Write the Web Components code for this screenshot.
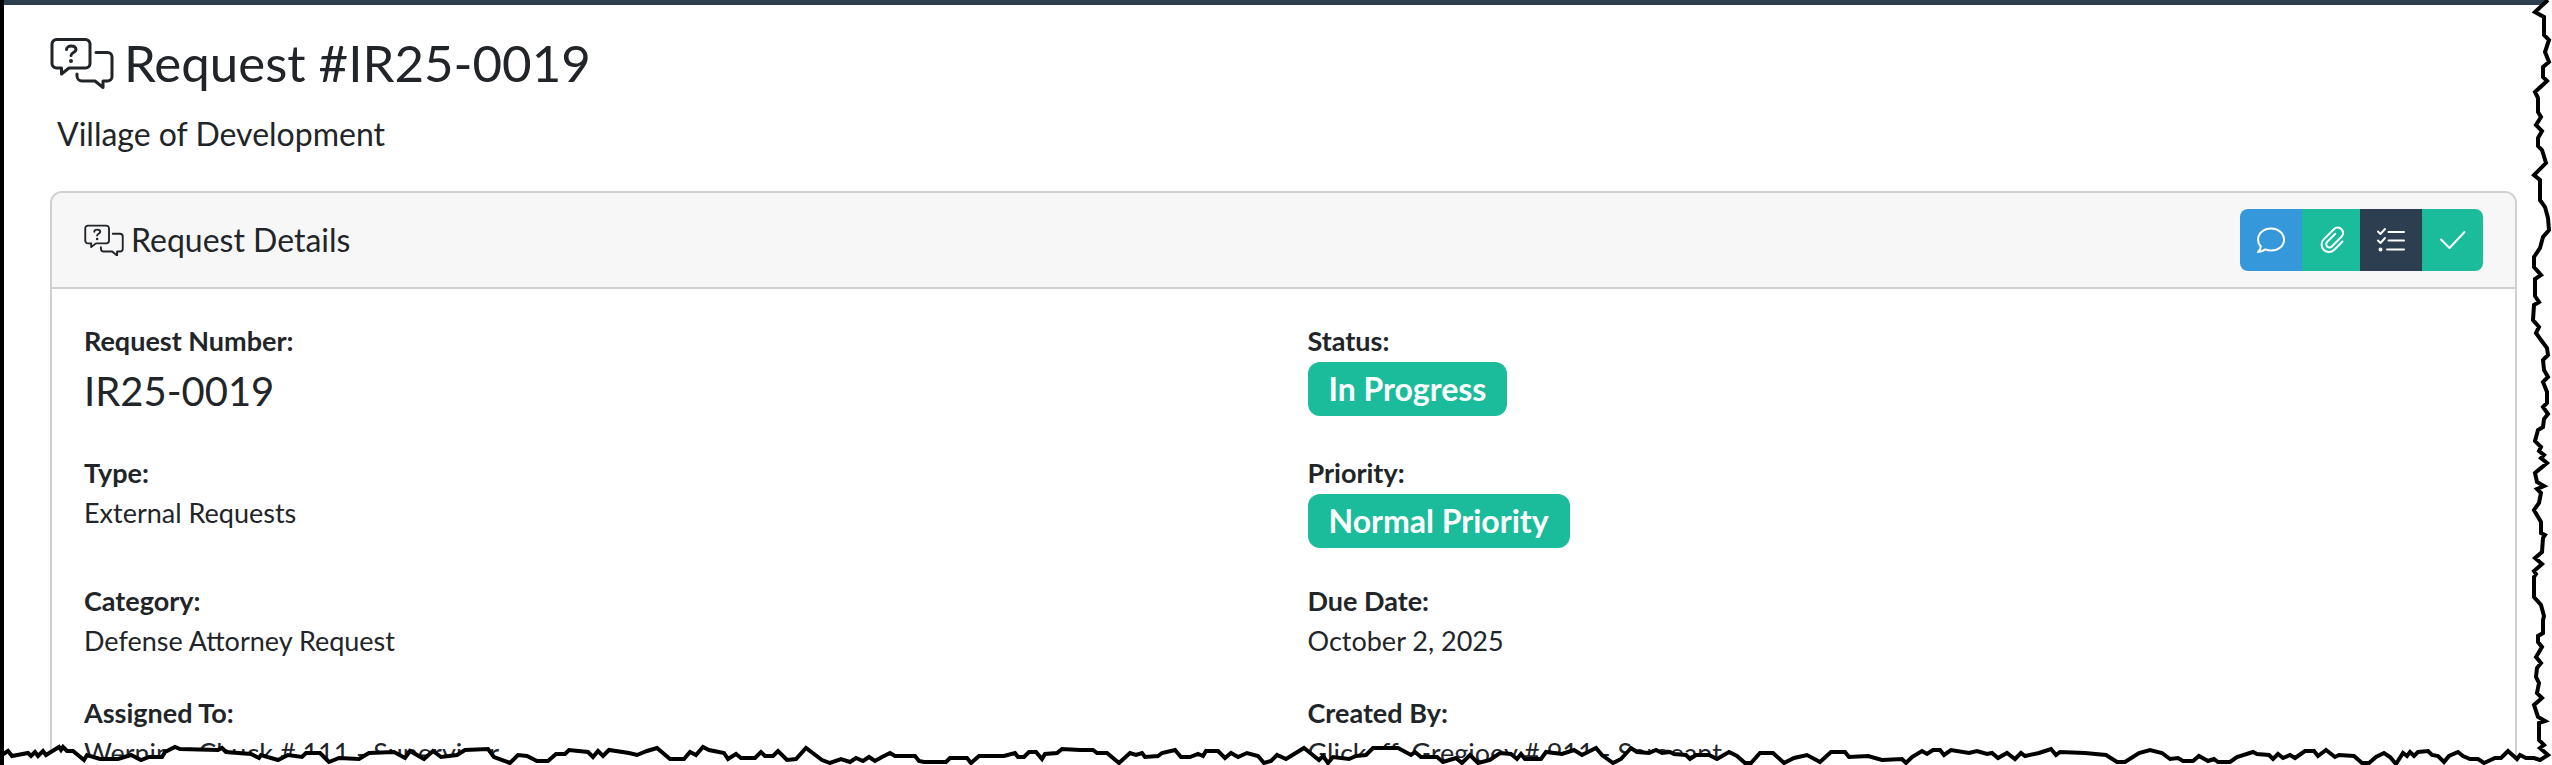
<!DOCTYPE html>
<html lang="en">
<head>
<meta charset="utf-8">
<meta name="viewport" content="width=device-width, initial-scale=1">
<title>Request #IR25-0019</title>
<style>
  body {
    margin: 0;
    background: #fff;
    color: #212529;
    font-family: Lato, "Liberation Sans", sans-serif;
    font-size: 27px;
    line-height: 40px;
  }
</style>
</head>
<body>
<torn-frame>
  <page-heading org="Village of Development">Request #IR25-0019</page-heading>
  <detail-card>
    <span slot="title">Request Details</span>
    <action-group slot="actions">
      <action-button icon="comment" tone="info" label="Comment"></action-button>
      <action-button icon="clip" tone="success" label="Attachments"></action-button>
      <action-button icon="list" tone="primary" label="Tasks"></action-button>
      <action-button icon="check" tone="success" label="Complete"></action-button>
    </action-group>
    <detail-field label="Request Number:" kind="large">IR25-0019</detail-field>
    <detail-field label="Status:" kind="badge">In Progress</detail-field>
    <detail-field label="Type:">External Requests</detail-field>
    <detail-field label="Priority:" kind="badge">Normal Priority</detail-field>
    <detail-field label="Category:">Defense Attorney Request</detail-field>
    <detail-field label="Due Date:">October 2, 2025</detail-field>
    <detail-field label="Assigned To:">Werning, Chuck # 111 - Supervisor</detail-field>
    <detail-field label="Created By:">Glickoff, Gregjoey # 911 - Sergeant</detail-field>
  </detail-card>
</torn-frame>

<script>
/** Base class: renders once into an open shadow root */
class BaseElement extends HTMLElement {
  constructor() {
    super()
    this.attachShadow({ mode: 'open' })
  }
  connectedCallback() { this.shadowRoot.innerHTML = this._template() }
}

const BOTTOM_EDGE = '2,755 8,751 12,756 28,753 31,756 35,752 38,756 43,751 46,755 59,747 61,750 63,747 67,751 73,751 84,760 87,755 100,759 118,759 131,755 141,760 149,757 162,757 165,752 175,747 180,749 218,750 222,748 226,752 251,754 259,758 261,755 278,760 288,755 302,757 306,753 320,753 329,762 339,758 359,759 369,753 394,752 405,758 410,751 424,759 433,751 441,757 457,755 465,750 488,749 494,757 510,763 518,755 527,756 537,761 548,761 556,754 565,754 569,750 588,752 593,757 598,751 603,756 609,750 629,753 637,755 647,751 657,748 670,759 684,759 690,752 696,755 703,747 709,750 724,753 728,759 736,754 741,758 755,758 761,752 765,756 773,756 778,751 787,760 796,759 806,748 822,760 830,763 841,759 850,762 856,758 863,761 869,757 875,761 882,757 890,753 895,756 915,756 919,761 924,762 946,762 950,758 967,758 971,763 979,756 1004,756 1015,753 1018,757 1024,757 1029,752 1036,752 1042,759 1045,754 1057,753 1062,749 1080,750 1093,750 1097,753 1107,753 1119,763 1130,753 1136,755 1142,753 1145,757 1158,756 1162,753 1175,750 1181,757 1190,757 1198,754 1203,756 1206,751 1218,751 1225,758 1231,753 1238,757 1247,753 1258,756 1264,763 1271,761 1277,755 1286,759 1304,748 1309,752 1319,760 1323,756 1328,763 1333,757 1349,759 1356,756 1366,755 1373,748 1398,748 1411,755 1415,752 1421,757 1437,757 1443,762 1456,758 1462,763 1470,755 1478,763 1490,760 1500,753 1511,754 1517,759 1521,754 1525,759 1541,759 1546,752 1562,754 1574,750 1582,755 1596,748 1602,755 1613,763 1621,759 1631,748 1637,752 1649,753 1656,750 1662,753 1670,752 1674,754 1686,755 1690,759 1696,755 1709,755 1717,759 1729,752 1737,756 1745,763 1751,763 1760,753 1773,753 1784,763 1794,758 1807,755 1820,762 1831,752 1845,752 1849,757 1868,756 1882,760 1902,759 1906,763 1912,757 1922,751 1927,754 1933,750 1940,750 1944,755 1951,750 1969,753 1977,751 1987,754 1992,753 1998,758 2007,753 2015,759 2021,753 2025,756 2039,753 2051,749 2056,755 2060,752 2085,753 2106,755 2117,762 2125,762 2139,753 2150,750 2162,753 2170,759 2178,758 2183,761 2193,761 2199,756 2208,761 2214,759 2218,762 2230,762 2237,757 2253,752 2257,754 2269,755 2273,759 2278,754 2283,758 2290,755 2295,758 2305,751 2314,751 2318,756 2326,750 2335,757 2339,755 2354,756 2362,763 2369,763 2376,757 2384,753 2390,757 2396,764 2403,753 2407,756 2410,752 2414,756 2418,752 2428,751 2432,755 2438,756 2444,762 2449,756 2458,752 2463,756 2470,759 2478,759 2484,763 2495,758 2501,758 2508,751 2517,759 2520,755 2526,758 2534,758 2540,760'
const RIGHT_EDGE = '2548,755 2540,748 2544,745 2539,740 2539,723 2545,721 2538,717 2534,705 2542,698 2537,693 2539,683 2536,677 2537,668 2541,663 2536,657 2542,647 2538,642 2538,636 2543,633 2543,620 2544,616 2541,605 2534,597 2534,577 2536,574 2534,571 2542,564 2535,558 2542,552 2543,538 2545,535 2541,533 2541,522 2534,510 2539,503 2541,493 2537,489 2544,486 2537,482 2535,473 2547,463 2541,458 2544,455 2539,451 2541,447 2535,441 2538,430 2543,427 2544,419 2548,414 2543,407 2547,403 2547,392 2543,382 2548,377 2544,370 2543,360 2548,355 2547,348 2541,340 2536,333 2539,327 2533,320 2534,305 2539,302 2535,296 2535,279 2541,275 2534,267 2534,257 2540,248 2543,237 2549,230 2548,218 2545,207 2540,200 2540,180 2534,175 2546,163 2542,150 2538,146 2538,138 2542,131 2536,125 2541,117 2538,112 2538,98 2535,92 2547,81 2543,77 2543,67 2549,62 2545,52 2549,40 2544,35 2544,17 2535,12 2548,0'

/** torn-frame — page with a dark bar on top and ragged right and bottom edges */
class TornFrame extends BaseElement {
  _template() {
    return `
      <style>
        :host {
          display: block;
          position: relative;
          box-sizing: border-box;
          height: 100vh;
          overflow: hidden;
          border-left: 4px solid #000;
        }
        .bar { height: 5px; background: #2c3e50; }
        main { padding: 27px 35px 0 46px; }
        svg {
          position: absolute;
          inset: 0;
          width: 100%;
          height: 100%;
          pointer-events: none;
        }
      </style>
      <div class="bar"></div>
      <main><slot></slot></main>
      <svg viewBox="4 0 2548 765" preserveAspectRatio="none" aria-hidden="true">
        <polygon fill="#fff" points="0,755 ${BOTTOM_EDGE} ${RIGHT_EDGE} 2560,0 2560,770 0,770"/>
        <polyline fill="none" stroke="#000" stroke-width="4" points="${BOTTOM_EDGE} ${RIGHT_EDGE}"/>
      </svg>
    `
  }
}

/** chat-icon — two speech bubbles, the front one with a question mark */
class ChatIcon extends BaseElement {
  _template() {
    return `
      <style>
        :host { display: block; flex: none; width: var(--icon-width, 40px); }
        svg { display: block; width: 100%; }
      </style>
      <svg viewBox="0 0 64 52" fill="none" stroke="currentColor" stroke-width="3" stroke-linecap="round" stroke-linejoin="round" aria-hidden="true">
        <path d="M6.500 2.500H35.500a4.500 4.500 0 0 1 4.500 4.500V26.500a4.500 4.500 0 0 1-4.500 4.500H19l-7.500 6V31H6.500A4.500 4.500 0 0 1 2 26.500V7a4.500 4.500 0 0 1 4.500-4.500z"/>
        <path d="M46 15.500H57.500a4.500 4.500 0 0 1 4.500 4.500V39.500a4.500 4.500 0 0 1-4.500 4.500H53v6.500L45 44H32a5 5 0 0 1-5-5V37"/>
        <path d="M16.500 12.500c0-4.500 9.500-5 9.500 0 0 3-5 3-5 6"/>
        <circle cx="21" cy="24" r="2" fill="currentColor" stroke="none"/>
      </svg>
    `
  }
}

/** page-heading — page title with the organisation under it */
class PageHeading extends BaseElement {
  _template() {
    return `
      <style>
        :host { display: block; margin-bottom: 37px; }
        h1 {
          display: flex;
          align-items: center;
          gap: 10px;
          margin: 0 0 20px;
          font-size: 51px;
          line-height: 62px;
          font-weight: 400;
        }
        chat-icon { --icon-width: 64px; }
        p { margin: 0; padding-left: 7px; font-size: 32px; }
      </style>
      <h1><chat-icon></chat-icon><slot></slot></h1>
      <p>${this.getAttribute('org')}</p>
    `
  }
}

/** detail-card — bordered card, slots: title, actions, default (fields) */
class DetailCard extends BaseElement {
  _template() {
    return `
      <style>
        :host {
          display: block;
          border: 2px solid #d0d0d0;
          border-radius: 12px;
          overflow: hidden;
        }
        header {
          display: flex;
          align-items: center;
          justify-content: space-between;
          padding: 16px 32px;
          border-bottom: 2px solid #d0d0d0;
          background: #f7f7f7;
        }
        h2 {
          display: flex;
          align-items: center;
          gap: 7px;
          margin: 0;
          font-size: 32px;
          font-weight: 400;
        }
        .body {
          display: grid;
          grid-template-columns: 1fr 1fr;
          gap: 32px 48px;
          padding: 32px;
        }
      </style>
      <header>
        <h2><chat-icon></chat-icon><slot name="title"></slot></h2>
        <slot name="actions"></slot>
      </header>
      <div class="body"><slot></slot></div>
    `
  }
}

/** detail-field — label over value; kind: large | badge */
class DetailField extends BaseElement {
  _template() {
    return `
      <style>
        :host { display: block; }
        dl, dd { margin: 0; }
        dt { font-weight: 700; }
        .large { font-size: 40px; line-height: 60px; }
        .badge {
          width: fit-content;
          margin: 1px 0;
          padding: 7px 21px;
          border-radius: 12px;
          background: #1abc9c;
          color: #fff;
          font-size: 32px;
          font-weight: 700;
        }
      </style>
      <dl>
        <dt>${this.getAttribute('label')}</dt>
        <dd class="${this.getAttribute('kind') || ''}"><slot></slot></dd>
      </dl>
    `
  }
}

class ActionGroup extends BaseElement {
  _template() {
    return `
      <style>
        :host { display: flex; border-radius: 8px; overflow: hidden; }
      </style>
      <slot></slot>
    `
  }
}

const ICONS = {
  comment: { width: 28, path: '<path d="M1 26c1.800-1.500 2.700-3.500 2.800-5.600C2 18.500 1 16.200 1 13.700 1 7.300 6.800 2.500 14 2.500S27 7.300 27 13.700 21.200 24.500 14 24.500c-2 0-3.900-.4-5.600-1.100C6.400 24.900 4 26 1 26z"/>' },
  clip: { width: 24, path: '<path d="M23.500 15.500l-8.200 8.200a7.200 7.200 0 0 1-10.600 0 7.200 7.200 0 0 1 0-10.300L14.900 3.200a5.300 5.300 0 0 1 7.600 0 5.300 5.300 0 0 1 0 7.600l-9.700 9.700a3.200 3.200 0 0 1-4.600 0 3.200 3.200 0 0 1 0-4.600l8.100-8.100"/>' },
  list: { width: 28, path: '<path d="M1 5.500l2.500 2.500L8 3M1 14.500l2.500 2.500L8 12M11.500 6H27M11.500 14.500H27M10 23.500H27"/><circle cx="3.500" cy="23.500" r="1" fill="currentColor"/>' },
  check: { width: 27, path: '<path d="M2 13.500l8.500 8.500L25.500 6"/>' }
}

/** action-button — coloured icon button of the card header */
class ActionButton extends BaseElement {
  _template() {
    const icon = ICONS[this.getAttribute('icon')]
    return `
      <style>
        :host { display: block; --tone: #1abc9c; }
        :host([tone="info"]) { --tone: #3498db; }
        :host([tone="primary"]) { --tone: #2c3e50; }
        button {
          display: flex;
          align-items: center;
          height: 62px;
          margin: 0;
          padding: 0 17px;
          border: 0;
          background: var(--tone);
          color: #fff;
          cursor: pointer;
        }
        button:hover { filter: brightness(0.9); }
        svg { overflow: visible; }
      </style>
      <button type="button" aria-label="${this.getAttribute('label')}">
        <svg width="${icon.width}" height="28" viewBox="0 0 ${icon.width} 28" fill="none" stroke="currentColor" stroke-width="2" stroke-linecap="round" stroke-linejoin="round">${icon.path}</svg>
      </button>
    `
  }
}

customElements.define('torn-frame', TornFrame)
customElements.define('chat-icon', ChatIcon)
customElements.define('page-heading', PageHeading)
customElements.define('detail-card', DetailCard)
customElements.define('detail-field', DetailField)
customElements.define('action-group', ActionGroup)
customElements.define('action-button', ActionButton)
</script>
</body>
</html>
